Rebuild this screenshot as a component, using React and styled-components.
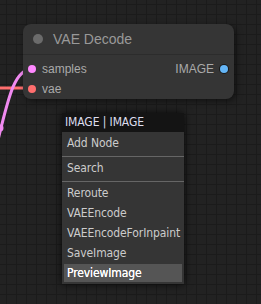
import React from 'react'
import styled, { createGlobalStyle } from 'styled-components'

const GlobalStyle = createGlobalStyle`
  html, body {
    margin: 0;
    padding: 0;
    background: #222;
  }
`

const Canvas = styled.div`
  position: relative;
  width: 261px;
  height: 304px;
  overflow: hidden;
  background-color: #222;
  background-image:
    linear-gradient(to right, #1b1b1b 1px, transparent 1px),
    linear-gradient(to bottom, #1b1b1b 1px, transparent 1px);
  background-size: 10px 10px;
  background-position: 6px 4px;
  font-family: Arial, "Liberation Sans", sans-serif;
`

const Wires = styled.svg`
  position: absolute;
  left: 0;
  top: 0;
`

const Node = styled.div`
  position: absolute;
  left: 23px;
  top: 24px;
  width: 211px;
  height: 75px;
  background: #353535;
  border-radius: 8px;
  box-shadow: 2px 2px 6px rgba(0, 0, 0, 0.5);
  display: flex;
  flex-direction: column;
`

const NodeTitle = styled.div`
  height: 30px;
  display: flex;
  align-items: center;
  gap: 10px;
  padding-left: 10px;
  border-bottom: 1px solid #2c2c2c;
  color: #999;
  font-size: 14px;
`

const StatusDot = styled.span`
  width: 10px;
  height: 10px;
  border-radius: 50%;
  background: #6b6b6b;
`

const Slots = styled.div`
  padding-top: 4px;
  display: flex;
  flex-direction: column;
`

const SlotRow = styled.div`
  height: 20px;
  display: flex;
  align-items: center;
  padding: 0 6px 0 5px;
  color: #aaa;
  font-size: 12px;
`

const Slot = styled.div`
  display: flex;
  align-items: center;
  gap: 6px;
  flex-direction: ${p => (p.$out ? 'row-reverse' : 'row')};
  margin-left: ${p => (p.$out ? 'auto' : '0')};
`

const SlotDot = styled.span`
  width: 8px;
  height: 8px;
  border-radius: 50%;
  background: ${p => p.$color};
  box-shadow: ${p => (p.$ring ? '0 0 0 1px #1a1a1a' : 'none')};
`

const Menu = styled.div`
  position: absolute;
  left: 62px;
  top: 113px;
  width: 122px;
  background: #353535;
  box-shadow: 0 0 8px rgba(0, 0, 0, 0.8);
  font-family: "DejaVu Sans Condensed", "DejaVu Sans", sans-serif;
  font-size: 12px;
  letter-spacing: -0.1px;
`

const MenuTitle = styled.div`
  height: 19px;
  line-height: 19px;
  padding-left: 3px;
  background: #141414;
  color: #dde;
`

const MenuList = styled.div`
  padding: 2px 0 2px;
  display: flow-root;
`

const Entry = styled.div`
  height: 18px;
  line-height: 19px;
  margin: 2px;
  padding-left: 3px;
  color: ${p => (p.$active ? '#fff' : '#ccc')};
  background: ${p => (p.$active ? '#555' : 'transparent')};
  text-shadow: ${p => (p.$active ? '0 0 0.6px #fff' : 'none')};
  white-space: nowrap;
  &:first-child {
    margin-top: 0;
  }
  &:last-child {
    margin-bottom: 0;
  }
`

const Separator = styled.div`
  height: 2px;
  margin: 2px 0;
  border-bottom: 1px solid #666;
`

export default function App() {
  return (
    <Canvas>
      <GlobalStyle />
      <Wires width="261" height="304" viewBox="0 0 261 304">
        <path d="M -5 88 L 30 88" stroke="#ff6e6e" strokeWidth="3" fill="none" />
        <path d="M 32 69 C 14 69, 8 100, -2 140" stroke="#f08af0" strokeWidth="3" fill="none" />
        <circle cx="0" cy="128" r="3.5" fill="#f08af0" />
      </Wires>
      <Node>
        <NodeTitle>
          <StatusDot />
          VAE Decode
        </NodeTitle>
        <Slots>
          <SlotRow>
            <Slot>
              <SlotDot $color="#ff88ff" />
              samples
            </Slot>
            <Slot $out>
              <SlotDot $color="#64b5f6" $ring />
              IMAGE
            </Slot>
          </SlotRow>
          <SlotRow>
            <Slot>
              <SlotDot $color="#ff6e6e" />
              vae
            </Slot>
          </SlotRow>
        </Slots>
      </Node>
      <Menu>
        <MenuTitle>IMAGE | IMAGE</MenuTitle>
        <MenuList>
          <Entry>Add Node</Entry>
          <Separator />
          <Entry>Search</Entry>
          <Separator />
          <Entry>Reroute</Entry>
          <Entry>VAEEncode</Entry>
          <Entry>VAEEncodeForInpaint</Entry>
          <Entry>SaveImage</Entry>
          <Entry $active>PreviewImage</Entry>
        </MenuList>
      </Menu>
    </Canvas>
  )
}
